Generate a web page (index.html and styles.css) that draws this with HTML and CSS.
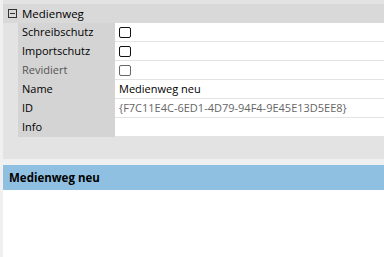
FILE: index.html
```html
<!DOCTYPE html>
<html lang="de">
<head>
    <meta charset="UTF-8">
    <title>Medienweg</title>
    <link rel="stylesheet" href="styles.css">
</head>
<body>

<div class="grid">
    <div class="category">
        <span class="toggle"></span>
        <span>Medienweg</span>
    </div>
    <div class="row">
        <div class="label">Schreibschutz</div>
        <div class="value"><span class="check"></span></div>
    </div>
    <div class="row">
        <div class="label">Importschutz</div>
        <div class="value"><span class="check"></span></div>
    </div>
    <div class="row disabled">
        <div class="label">Revidiert</div>
        <div class="value"><span class="check"></span></div>
    </div>
    <div class="row">
        <div class="label">Name</div>
        <div class="value">Medienweg neu</div>
    </div>
    <div class="row disabled-value">
        <div class="label">ID</div>
        <div class="value">{F7C11E4C-6ED1-4D79-94F4-9E45E13D5EE8}</div>
    </div>
    <div class="row">
        <div class="label">Info</div>
        <div class="value"></div>
    </div>
    <div class="grid-rest"></div>
</div>

<div class="details">
    <div class="details-title">Medienweg neu</div>
    <div class="details-body"></div>
</div>

</body>
</html>
```

FILE: styles.css
```css
body {
    margin: 0;
    width: 384px;
    height: 257px;
    overflow: hidden;
    background-color: #f0f0f0;
    font-family: "Segoe UI", "Open Sans", sans-serif;
    font-size: 11px;
    color: #000;
}
.grid {
    margin-left: 3px;
    padding-top: 4px;
    background-color: #e3e3e3;
}
.category {
    height: 19px;
    display: flex;
    align-items: center;
    background-color: #d9d9d9;
    padding-left: 5px;
    gap: 5px;
    font-size: 11.5px;
}
.toggle {
    position: relative;
    width: 9px;
    height: 9px;
    border: 1px solid #333;
    box-sizing: border-box;
}
.toggle::after {
    content: "";
    position: absolute;
    left: 1px;
    right: 1px;
    top: 3px;
    height: 1px;
    background-color: #333;
}
.row {
    display: flex;
    height: 19px;
    padding-left: 15px;
}
.label {
    width: 93px;
    background-color: #d4d4d4;
    padding-left: 4px;
    line-height: 18px;
}
.value {
    flex: 1;
    background-color: #fff;
    border-bottom: 1px solid #e3e3e3;
    padding-left: 4px;
    line-height: 18px;
    display: flex;
    align-items: center;
}
.check {
    width: 12px;
    height: 11px;
    border: 1.5px solid #111;
    border-radius: 2px;
    box-sizing: border-box;
}
.disabled .label {
    color: #555;
}
.disabled .check {
    border-color: #666;
    border-width: 1px;
}
.disabled-value .value {
    color: #666;
}
.grid-rest {
    height: 22px;
}
.details {
    margin-top: 6px;
    margin-left: 3px;
}
.details-title {
    height: 25px;
    line-height: 25px;
    background-color: #8fc0e1;
    padding-left: 6px;
    font-weight: bold;
    font-size: 11.5px;
}
.details-body {
    height: 67px;
    background-color: #fff;
}
```
